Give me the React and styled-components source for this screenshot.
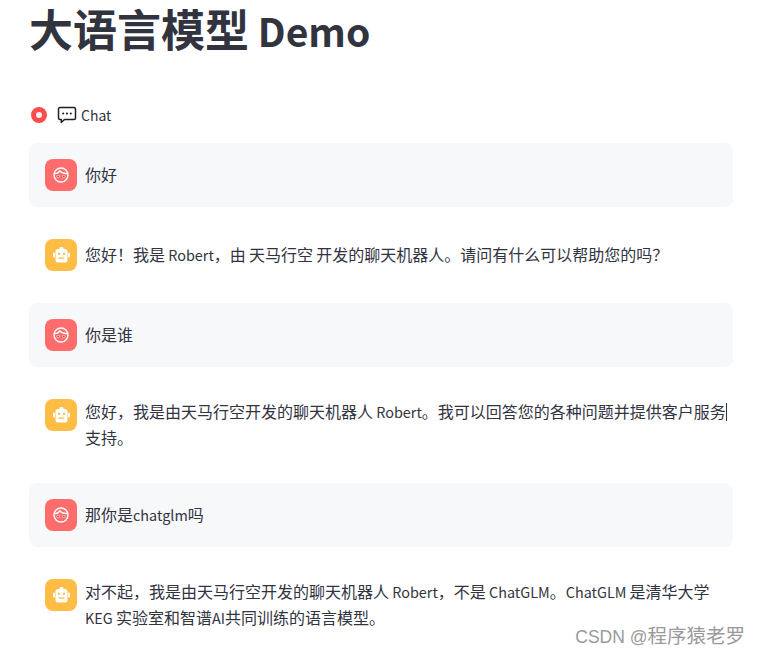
import React from "react";
import styled, { createGlobalStyle } from "styled-components";

const messages = [
  { id: 1, role: "user", text: "你好" },
  { id: 2, role: "bot", text: "您好！我是 Robert，由 天马行空 开发的聊天机器人。请问有什么可以帮助您的吗？" },
  { id: 3, role: "user", text: "你是谁" },
  {
    id: 4,
    role: "bot",
    text: "您好，我是由天马行空开发的聊天机器人 Robert。我可以回答您的各种问题并提供客户服务",
    tail: "支持。",
  },
  { id: 5, role: "user", text: "那你是chatglm吗" },
  {
    id: 6,
    role: "bot",
    text: "对不起，我是由天马行空开发的聊天机器人 Robert，不是 ChatGLM。ChatGLM 是清华大学 KEG 实验室和智谱AI共同训练的语言模型。",
  },
];

// latin runs are set a bit smaller than the CJK around them
function Mixed({ text }) {
  return text
    .split(/([A-Za-z ]+)/)
    .map((part, i) => (i % 2 ? <Latin key={i}>{part}</Latin> : part));
}

function FaceIcon() {
  return (
    <svg width="16" height="16" viewBox="0 0 16 16" fill="none" stroke="#fff" strokeWidth="1.4">
      <circle cx="8" cy="8" r="7" />
      <path d="M1.5 6.5c2.4.2 4.2-.6 5.3-2.6 1.5 1.9 3.6 2.8 7.7 2.6" strokeLinecap="round" />
      <circle cx="5.2" cy="9.4" r="1.7" fill="#ffc4c4" stroke="none" />
      <circle cx="10.8" cy="9.4" r="1.7" fill="#ffc4c4" stroke="none" />
      <circle cx="5.2" cy="9.4" r="0.9" fill="#c94545" stroke="none" />
      <circle cx="10.8" cy="9.4" r="0.9" fill="#c94545" stroke="none" />
    </svg>
  );
}

function RobotIcon() {
  return (
    <svg width="17" height="16" viewBox="0 0 17 16">
      <rect x="6.5" y="0" width="4" height="3" rx="1.2" fill="#fff" />
      <rect x="0" y="5.5" width="2" height="5" rx="1" fill="#fff" />
      <rect x="15" y="5.5" width="2" height="5" rx="1" fill="#fff" />
      <rect x="2.5" y="2" width="12" height="13.5" rx="2.5" fill="#fff" />
      <rect x="5" y="5.8" width="2" height="2" fill="#ffbd45" />
      <rect x="10" y="5.8" width="2" height="2" fill="#ffbd45" />
      <rect x="5.5" y="10.4" width="6" height="1.3" fill="#ffbd45" />
    </svg>
  );
}

function ChatIcon() {
  return (
    <svg width="20" height="18" viewBox="0 0 20 18" fill="none">
      <path
        d="M3 1.5h14a1.5 1.5 0 0 1 1.5 1.5v9a1.5 1.5 0 0 1-1.5 1.5H7.5l-3.2 3v-3H3A1.5 1.5 0 0 1 1.5 12V3A1.5 1.5 0 0 1 3 1.5z"
        stroke="#1f2027"
        strokeWidth="1.5"
        strokeLinejoin="round"
      />
      <circle cx="6.2" cy="7.5" r="1.05" fill="#1f2027" />
      <circle cx="10" cy="7.5" r="1.05" fill="#1f2027" />
      <circle cx="13.8" cy="7.5" r="1.05" fill="#1f2027" />
    </svg>
  );
}

function App() {
  return (
    <>
      <GlobalStyle />
      <Page>
        <Title>
          大语言模型<TitleLatin> Demo</TitleLatin>
        </Title>
        <ModeRow>
          <RadioDot />
          <ChatIcon />
          <ModeLabel>Chat</ModeLabel>
        </ModeRow>
        <MessageList>
          {messages.map((msg) => (
            <Message key={msg.id} $user={msg.role === "user"}>
              <Avatar $user={msg.role === "user"}>
                {msg.role === "user" ? <FaceIcon /> : <RobotIcon />}
              </Avatar>
              <MessageText>
                <MessageBody>
                  <Mixed text={msg.text} />
                  {msg.tail && <Caret />}
                  {msg.tail}
                </MessageBody>
              </MessageText>
            </Message>
          ))}
        </MessageList>
        <Watermark>
          CSDN @<WatermarkName>程序猿老罗</WatermarkName>
        </Watermark>
      </Page>
    </>
  );
}

const GlobalStyle = createGlobalStyle`
  html, body {
    margin: 0;
    background: #fff;
    overflow: hidden;
  }
  body {
    font-family: "Noto Sans CJK SC", "Noto Sans", sans-serif;
    color: #31333f;
  }
`;

const Page = styled.div`
  position: relative;
  width: 759px;
  height: 655px;
  overflow: hidden;
  box-sizing: border-box;
  padding: 0 26px 0 29px;
`;

const Title = styled.h1`
  margin: 0;
  height: 64px;
  line-height: 56px;
  font-size: 44px;
  font-weight: 700;
  color: #31333f;
`;

const TitleLatin = styled.span`
  font-size: 39px;
`;

const ModeRow = styled.div`
  display: flex;
  align-items: center;
  margin: 39px 0 0 2px;
  height: 24px;
`;

const RadioDot = styled.span`
  width: 6px;
  height: 6px;
  border: 5px solid #ff4b4b;
  border-radius: 50%;
  background: #f0f2f6;
  margin-right: 10px;
`;

const ModeLabel = styled.span`
  margin-left: 4px;
  font-size: 14px;
`;

const MessageList = styled.div`
  display: flex;
  flex-direction: column;
  gap: 16px;
  margin-top: 16px;
`;

const Message = styled.div`
  display: flex;
  align-items: flex-start;
  gap: 8px;
  padding: 16px 4px 16px 16px;
  border-radius: 8px;
  background: ${(p) => (p.$user ? "#f7f8fa" : "transparent")};
`;

const Avatar = styled.div`
  flex: none;
  display: flex;
  align-items: center;
  justify-content: center;
  width: 32px;
  height: 32px;
  border-radius: 8px;
  background: ${(p) => (p.$user ? "#ff6c6c" : "#ffbd45")};
`;

const MessageText = styled.div`
  display: flex;
  align-items: center;
  min-height: 32px;
  flex: 1;
  font-size: 16px;
  line-height: 26px;
`;

const MessageBody = styled.div`
  margin-top: -1px;
  padding-bottom: 1px;
`;

const Latin = styled.span`
  font-size: 14.4px;
  line-height: 1;
`;

const Caret = styled.span`
  display: inline-block;
  width: 1px;
  height: 18px;
  line-height: 1;
  background: #31333f;
  vertical-align: -3px;
`;

const Watermark = styled.div`
  position: absolute;
  right: 14px;
  top: 623px;
  font-family: "Liberation Sans", "Noto Sans CJK SC", sans-serif;
  font-size: 17.5px;
  line-height: 26px;
  color: #9a9a9a;
`;

const WatermarkName = styled.span`
  font-size: 19.5px;
`;

export default App;
